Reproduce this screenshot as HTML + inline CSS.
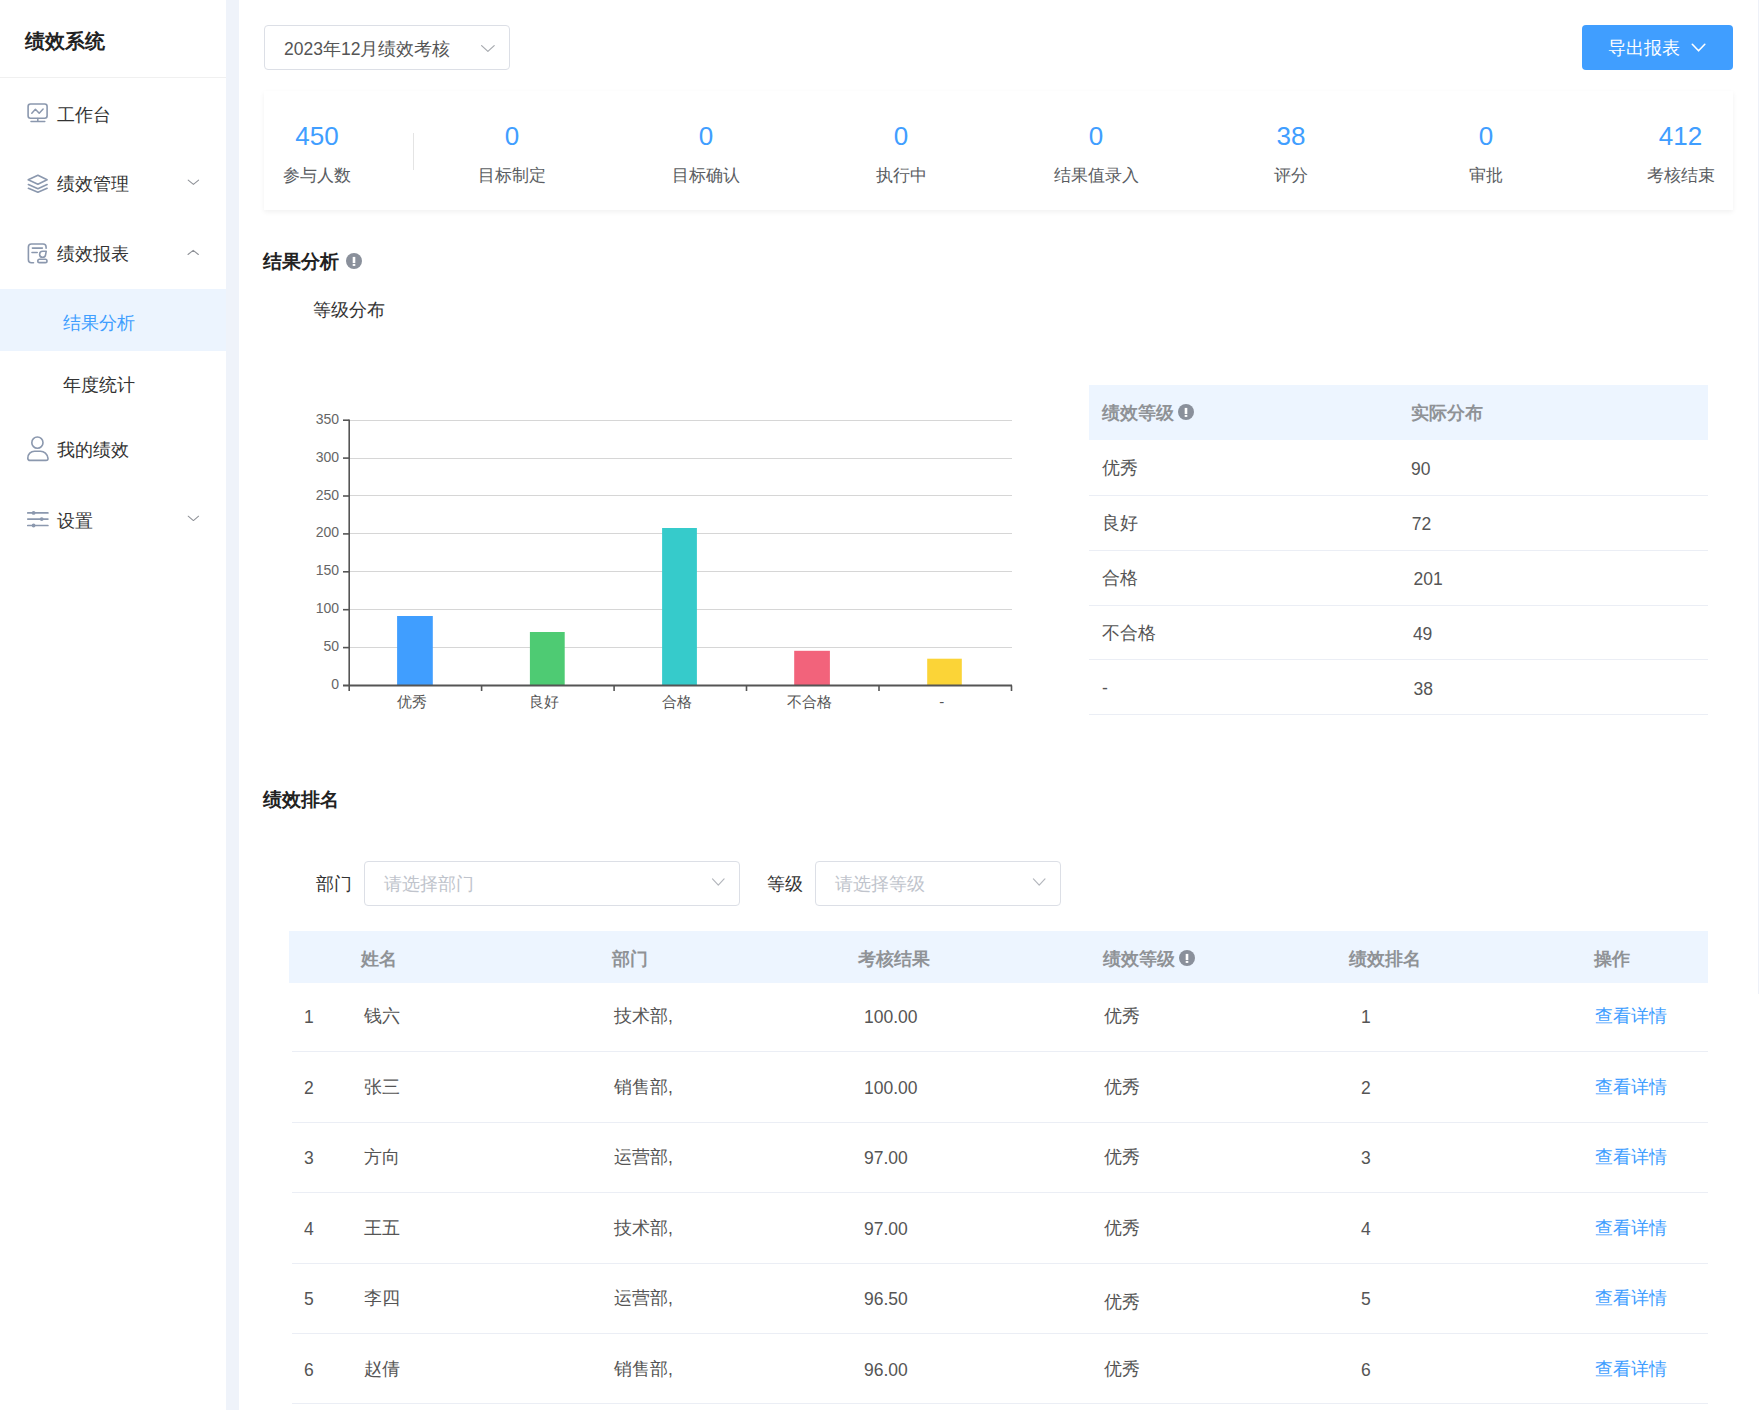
<!DOCTYPE html>
<html><head><meta charset="utf-8">
<style>
*{box-sizing:border-box;margin:0;padding:0}
html,body{width:1759px;height:1410px;overflow:hidden;background:#fff}
body{font-family:"Liberation Sans",sans-serif;color:#303133;position:relative}
.a{position:absolute;white-space:nowrap;line-height:1}
.p{position:absolute}
.logo{font-size:20px;font-weight:bold;color:#222}
.mi{font-size:17.5px;color:#333}
.num{font-size:26px;color:#409eff}
.lbl{font-size:17.25px;color:#5a5d62}
.h2{font-size:19px;font-weight:bold;color:#222}
.th{font-size:17.5px;font-weight:bold;color:#8f9296}
.td{font-size:17.5px;color:#555}
.link{font-size:17.5px;color:#409eff}
.ph{font-size:17.5px;color:#c0c4cc}
.box{position:absolute;border:1px solid #dcdfe6;border-radius:4px;background:#fff}
.rb{position:absolute;height:1px;background:#ebeef5}
.yl{font-size:14px;color:#666;text-align:right;width:40px}
.xl{font-size:15px;color:#555;text-align:center;width:80px}
</style></head><body>

<div class="p" style="left:0;top:0;width:226px;height:1410px;background:#fff"></div>
<div class="p" style="left:226px;top:0;width:13px;height:1410px;background:#eff3fa"></div>
<div class="p" style="left:0;top:77px;width:226px;height:1px;background:#f0f0f0"></div>
<div class="p" style="left:0;top:289px;width:226px;height:62px;background:#ecf4fe"></div>
<div class="a logo" style="left:25px;top:30.5px">绩效系统</div>
<div class="a mi" style="left:57px;top:106.50px;">工作台</div>
<div class="a mi" style="left:57px;top:175.50px;">绩效管理</div>
<div class="a mi" style="left:57px;top:245.50px;">绩效报表</div>
<div class="a mi" style="left:63px;top:314.50px;color:#409eff">结果分析</div>
<div class="a mi" style="left:63px;top:376.70px;">年度统计</div>
<div class="a mi" style="left:57px;top:441.90px;">我的绩效</div>
<div class="a mi" style="left:57px;top:512.70px;">设置</div>
<svg class="p" style="left:0;top:0" width="226" height="560" viewBox="0 0 226 560" fill="none" stroke="#8b98ae" stroke-width="1.6" stroke-linecap="round" stroke-linejoin="round">
<rect x="28.1" y="104" width="19" height="14.2" rx="2.4"/>
<polyline points="31.8,113.2 35.4,109.3 39.2,113.2 43.1,109.1" stroke-width="1.5"/>
<path d="M37.8,118.5V121.5M31,121.5H44.8" stroke-width="1.5"/>
<path d="M37.9,175.2L47.1,179.8L37.9,184.2L28.2,179.8Z"/>
<path d="M28.4,184.6L37.9,188.7L47.1,184.6"/>
<path d="M28.4,188.3L37.9,192.3L47.1,188.3"/>
<path d="M33.5,262.8H31.4Q28.4,262.8 28.4,259.8V247Q28.4,244 31.4,244H43.1Q46.1,244 46.1,247V248.3"/>
<path d="M32.4,248.1H42.4M32,252.5H37.2"/>
<path d="M46.2,251.3H42.6A3,3 0 1 0 45.6,254.6Z"/>
<rect x="37.8" y="259.2" width="9.2" height="3.4" rx="1.7"/>
<circle cx="37.4" cy="442.65" r="5.6" stroke-width="1.6"/>
<path d="M30,460.4H46Q48.2,460.4 48,458.3C47.5,454 44,451.2 40.5,451.2H34.5C31,451.2 27.6,454 27.8,458.3Q28,460.4 30,460.4Z" stroke-width="1.6"/>
<path d="M27.8,512.9H47.9M27.8,519.1H47.9M27.8,525.5H47.9" stroke-width="1.7"/>
</svg>
<svg class="p" style="left:0;top:0" width="226" height="560" viewBox="0 0 226 560" fill="#8b98ae">
<circle cx="33.6" cy="512.9" r="1.9"/><circle cx="41.7" cy="519.1" r="1.9"/><circle cx="33.6" cy="525.5" r="1.9"/>
</svg>
<svg class="p" style="left:0;top:0" width="1759" height="1410" fill="none" stroke="#8e9197" stroke-width="1.05" stroke-linecap="round" stroke-linejoin="round"><path d="M188.2,180.1L193.39999999999998,184.45L198.6,180.1"/></svg>
<svg class="p" style="left:0;top:0" width="1759" height="1410" fill="none" stroke="#8e9197" stroke-width="1.05" stroke-linecap="round" stroke-linejoin="round"><path d="M188.0,254.5L193.2,250.3L198.4,254.5"/></svg>
<svg class="p" style="left:0;top:0" width="1759" height="1410" fill="none" stroke="#8e9197" stroke-width="1.05" stroke-linecap="round" stroke-linejoin="round"><path d="M188.2,516.2L193.39999999999998,520.5500000000001L198.6,516.2"/></svg>
<div class="box" style="left:264px;top:25px;width:246px;height:45px"></div>
<div class="a mi" style="left:284px;top:40.50px;color:#555">2023年12月绩效考核</div>
<svg class="p" style="left:0;top:0" width="1759" height="1410" fill="none" stroke="#a6a9ae" stroke-width="1.2" stroke-linecap="round" stroke-linejoin="round"><path d="M481.6,45.6L487.90000000000003,51.4L494.20000000000005,45.6"/></svg>
<div class="p" style="left:1582px;top:25px;width:151px;height:45px;background:#409eff;border-radius:4px"></div>
<div class="a mi" style="left:1608px;top:39.60px;color:#fff">导出报表</div>
<svg class="p" style="left:0;top:0" width="1759" height="1410" fill="none" stroke="#fff" stroke-width="1.6" stroke-linecap="round" stroke-linejoin="round"><path d="M1692.3,44.3L1698.55,50.8L1704.8,44.3"/></svg>
<div class="p" style="left:264px;top:91px;width:1469px;height:119px;background:#fff;box-shadow:0 2px 5px rgba(0,0,0,.06)"></div>
<div class="p" style="left:413px;top:133px;width:1px;height:37px;background:#e4e4e4"></div>
<div class="a num" style="left:217px;width:200px;text-align:center;top:122.75px">450</div>
<div class="a lbl" style="left:217px;width:200px;text-align:center;top:167.20px">参与人数</div>
<div class="a num" style="left:412px;width:200px;text-align:center;top:122.75px">0</div>
<div class="a lbl" style="left:412px;width:200px;text-align:center;top:167.20px">目标制定</div>
<div class="a num" style="left:606px;width:200px;text-align:center;top:122.75px">0</div>
<div class="a lbl" style="left:606px;width:200px;text-align:center;top:167.20px">目标确认</div>
<div class="a num" style="left:801px;width:200px;text-align:center;top:122.75px">0</div>
<div class="a lbl" style="left:801px;width:200px;text-align:center;top:167.20px">执行中</div>
<div class="a num" style="left:996px;width:200px;text-align:center;top:122.75px">0</div>
<div class="a lbl" style="left:996px;width:200px;text-align:center;top:167.20px">结果值录入</div>
<div class="a num" style="left:1191px;width:200px;text-align:center;top:122.75px">38</div>
<div class="a lbl" style="left:1191px;width:200px;text-align:center;top:167.20px">评分</div>
<div class="a num" style="left:1386px;width:200px;text-align:center;top:122.75px">0</div>
<div class="a lbl" style="left:1386px;width:200px;text-align:center;top:167.20px">审批</div>
<div class="a num" style="left:1580.5px;width:200px;text-align:center;top:122.75px">412</div>
<div class="a lbl" style="left:1580.5px;width:200px;text-align:center;top:167.20px">考核结束</div>
<div class="a h2" style="left:263px;top:252px">结果分析</div>
<svg class="p" style="left:345.6px;top:252.7px" width="16" height="16" viewBox="0 0 16 16"><circle cx="8" cy="8" r="8" fill="#8a909b"/><rect x="6.7" y="3.9000000000000004" width="2.6" height="6.2" fill="#fff"/><rect x="6.7" y="11" width="2.6" height="1.9" fill="#fff"/></svg>
<div class="a mi" style="left:313px;top:301.75px;">等级分布</div>
<svg class="p" style="left:0;top:0" width="1759" height="1410"><line x1="350" y1="647.5" x2="1012" y2="647.5" stroke="#d6d6d6" stroke-width="1"/><line x1="350" y1="609.5" x2="1012" y2="609.5" stroke="#d6d6d6" stroke-width="1"/><line x1="350" y1="571.5" x2="1012" y2="571.5" stroke="#d6d6d6" stroke-width="1"/><line x1="350" y1="533.5" x2="1012" y2="533.5" stroke="#d6d6d6" stroke-width="1"/><line x1="350" y1="495.5" x2="1012" y2="495.5" stroke="#d6d6d6" stroke-width="1"/><line x1="350" y1="458.5" x2="1012" y2="458.5" stroke="#d6d6d6" stroke-width="1"/><line x1="350" y1="420.5" x2="1012" y2="420.5" stroke="#d6d6d6" stroke-width="1"/><rect x="397.1" y="616" width="35.7" height="69.5" fill="#409eff"/><rect x="529.9" y="632" width="34.8" height="53.5" fill="#4ecb73"/><rect x="662.1" y="528" width="34.8" height="157.5" fill="#36cbcb"/><rect x="794.2" y="650.8" width="35.7" height="34.7" fill="#f2637b"/><rect x="927.2" y="658.7" width="34.6" height="26.8" fill="#fbd437"/><line x1="349.2" y1="419.5" x2="349.2" y2="691" stroke="#555" stroke-width="1.6"/><line x1="343" y1="685.5" x2="1012" y2="685.5" stroke="#555" stroke-width="2"/><line x1="343" y1="647.6" x2="349" y2="647.6" stroke="#555" stroke-width="1.6"/><line x1="343" y1="609.7" x2="349" y2="609.7" stroke="#555" stroke-width="1.6"/><line x1="343" y1="571.8" x2="349" y2="571.8" stroke="#555" stroke-width="1.6"/><line x1="343" y1="533.9" x2="349" y2="533.9" stroke="#555" stroke-width="1.6"/><line x1="343" y1="496.0" x2="349" y2="496.0" stroke="#555" stroke-width="1.6"/><line x1="343" y1="458.1" x2="349" y2="458.1" stroke="#555" stroke-width="1.6"/><line x1="343" y1="420.2" x2="349" y2="420.2" stroke="#555" stroke-width="1.6"/><line x1="481.6" y1="685.5" x2="481.6" y2="691" stroke="#555" stroke-width="1.6"/><line x1="614.1" y1="685.5" x2="614.1" y2="691" stroke="#555" stroke-width="1.6"/><line x1="746.5" y1="685.5" x2="746.5" y2="691" stroke="#555" stroke-width="1.6"/><line x1="879.0" y1="685.5" x2="879.0" y2="691" stroke="#555" stroke-width="1.6"/><line x1="1011.5" y1="685.5" x2="1011.5" y2="691" stroke="#555" stroke-width="1.6"/></svg>
<div class="a yl" style="left:299px;top:677.0px">0</div>
<div class="a yl" style="left:299px;top:639.1px">50</div>
<div class="a yl" style="left:299px;top:601.2px">100</div>
<div class="a yl" style="left:299px;top:563.3px">150</div>
<div class="a yl" style="left:299px;top:525.4px">200</div>
<div class="a yl" style="left:299px;top:487.5px">250</div>
<div class="a yl" style="left:299px;top:449.6px">300</div>
<div class="a yl" style="left:299px;top:411.7px">350</div>
<div class="a xl" style="left:371.9px;top:694px">优秀</div>
<div class="a xl" style="left:504.4px;top:694px">良好</div>
<div class="a xl" style="left:636.8px;top:694px">合格</div>
<div class="a xl" style="left:769.3px;top:694px">不合格</div>
<div class="a xl" style="left:901.7px;top:694px">-</div>
<div class="p" style="left:1089px;top:385px;width:619px;height:55px;background:#edf5ff"></div>
<div class="a th" style="left:1102px;top:404.50px;">绩效等级</div>
<svg class="p" style="left:1177.6px;top:404.4px" width="16" height="16" viewBox="0 0 16 16"><circle cx="8" cy="8" r="8" fill="#8a909b"/><rect x="6.7" y="3.9000000000000004" width="2.6" height="6.2" fill="#fff"/><rect x="6.7" y="11" width="2.6" height="1.9" fill="#fff"/></svg>
<div class="a th" style="left:1411px;top:404.50px;">实际分布</div>
<div class="a td" style="left:1102px;top:460.30px;">优秀</div>
<div class="a td" style="left:1411px;top:461.30px;">90</div>
<div class="rb" style="left:1089px;top:495.0px;width:619px"></div>
<div class="a td" style="left:1102px;top:515.10px;">良好</div>
<div class="a td" style="left:1411.7px;top:516.10px;">72</div>
<div class="rb" style="left:1089px;top:549.8px;width:619px"></div>
<div class="a td" style="left:1102px;top:569.90px;">合格</div>
<div class="a td" style="left:1413.6px;top:570.90px;">201</div>
<div class="rb" style="left:1089px;top:604.6px;width:619px"></div>
<div class="a td" style="left:1102px;top:624.70px;">不合格</div>
<div class="a td" style="left:1412.9px;top:625.70px;">49</div>
<div class="rb" style="left:1089px;top:659.4px;width:619px"></div>
<div class="a td" style="left:1102px;top:679.50px;">-</div>
<div class="a td" style="left:1413.6px;top:680.50px;">38</div>
<div class="rb" style="left:1089px;top:714.2px;width:619px"></div>
<div class="a h2" style="left:263px;top:790px">绩效排名</div>
<div class="a mi" style="left:316px;top:876.25px;">部门</div>
<div class="box" style="left:364px;top:861px;width:376px;height:45px"></div>
<div class="a ph" style="left:384px;top:876.25px;">请选择部门</div>
<svg class="p" style="left:0;top:0" width="1759" height="1410" fill="none" stroke="#b4b7bd" stroke-width="1.2" stroke-linecap="round" stroke-linejoin="round"><path d="M712.5,878.9L718.3,885.1L724.1,878.9"/></svg>
<div class="a mi" style="left:767px;top:876.25px;">等级</div>
<div class="box" style="left:815px;top:861px;width:246px;height:45px"></div>
<div class="a ph" style="left:835px;top:876.25px;">请选择等级</div>
<svg class="p" style="left:0;top:0" width="1759" height="1410" fill="none" stroke="#b4b7bd" stroke-width="1.2" stroke-linecap="round" stroke-linejoin="round"><path d="M1033.4,878.9L1039.2,885.1L1045.0,878.9"/></svg>
<div class="p" style="left:289px;top:931px;width:1419px;height:52px;background:#edf5ff"></div>
<div class="a th" style="left:361px;top:951.00px;">姓名</div>
<div class="a th" style="left:612px;top:951.00px;">部门</div>
<div class="a th" style="left:858px;top:951.00px;">考核结果</div>
<div class="a th" style="left:1103px;top:951.00px;">绩效等级</div>
<div class="a th" style="left:1349px;top:951.00px;">绩效排名</div>
<div class="a th" style="left:1594px;top:951.00px;">操作</div>
<svg class="p" style="left:1179.1px;top:950px" width="16" height="16" viewBox="0 0 16 16"><circle cx="8" cy="8" r="8" fill="#8a909b"/><rect x="6.7" y="3.9000000000000004" width="2.6" height="6.2" fill="#fff"/><rect x="6.7" y="11" width="2.6" height="1.9" fill="#fff"/></svg>
<div class="a td" style="left:304px;top:1009.00px;">1</div>
<div class="a td" style="left:364px;top:1008.00px;">钱六</div>
<div class="a td" style="left:614px;top:1008.00px;">技术部,</div>
<div class="a td" style="left:864px;top:1009.00px;">100.00</div>
<div class="a td" style="left:1104px;top:1008.00px;">优秀</div>
<div class="a td" style="left:1361px;top:1009.00px;">1</div>
<div class="a link" style="left:1595px;top:1008.00px;">查看详情</div>
<div class="rb" style="left:292px;top:1051.4px;width:1416px"></div>
<div class="a td" style="left:304px;top:1079.60px;">2</div>
<div class="a td" style="left:364px;top:1078.60px;">张三</div>
<div class="a td" style="left:614px;top:1078.60px;">销售部,</div>
<div class="a td" style="left:864px;top:1079.60px;">100.00</div>
<div class="a td" style="left:1104px;top:1078.60px;">优秀</div>
<div class="a td" style="left:1361px;top:1079.60px;">2</div>
<div class="a link" style="left:1595px;top:1078.60px;">查看详情</div>
<div class="rb" style="left:292px;top:1121.8px;width:1416px"></div>
<div class="a td" style="left:304px;top:1150.20px;">3</div>
<div class="a td" style="left:364px;top:1149.20px;">方向</div>
<div class="a td" style="left:614px;top:1149.20px;">运营部,</div>
<div class="a td" style="left:864px;top:1150.20px;">97.00</div>
<div class="a td" style="left:1104px;top:1149.20px;">优秀</div>
<div class="a td" style="left:1361px;top:1150.20px;">3</div>
<div class="a link" style="left:1595px;top:1149.20px;">查看详情</div>
<div class="rb" style="left:292px;top:1192.1px;width:1416px"></div>
<div class="a td" style="left:304px;top:1220.80px;">4</div>
<div class="a td" style="left:364px;top:1219.80px;">王五</div>
<div class="a td" style="left:614px;top:1219.80px;">技术部,</div>
<div class="a td" style="left:864px;top:1220.80px;">97.00</div>
<div class="a td" style="left:1104px;top:1219.80px;">优秀</div>
<div class="a td" style="left:1361px;top:1220.80px;">4</div>
<div class="a link" style="left:1595px;top:1219.80px;">查看详情</div>
<div class="rb" style="left:292px;top:1262.5px;width:1416px"></div>
<div class="a td" style="left:304px;top:1291.40px;">5</div>
<div class="a td" style="left:364px;top:1290.40px;">李四</div>
<div class="a td" style="left:614px;top:1290.40px;">运营部,</div>
<div class="a td" style="left:864px;top:1291.40px;">96.50</div>
<div class="a td" style="left:1104px;top:1293.90px;">优秀</div>
<div class="a td" style="left:1361px;top:1291.40px;">5</div>
<div class="a link" style="left:1595px;top:1290.40px;">查看详情</div>
<div class="rb" style="left:292px;top:1332.8px;width:1416px"></div>
<div class="a td" style="left:304px;top:1362.00px;">6</div>
<div class="a td" style="left:364px;top:1361.00px;">赵倩</div>
<div class="a td" style="left:614px;top:1361.00px;">销售部,</div>
<div class="a td" style="left:864px;top:1362.00px;">96.00</div>
<div class="a td" style="left:1104px;top:1361.00px;">优秀</div>
<div class="a td" style="left:1361px;top:1362.00px;">6</div>
<div class="a link" style="left:1595px;top:1361.00px;">查看详情</div>
<div class="rb" style="left:292px;top:1403.2px;width:1416px"></div>
<div class="p" style="left:1758px;top:0;width:1px;height:994px;background:#eef1f8"></div>
</body></html>
